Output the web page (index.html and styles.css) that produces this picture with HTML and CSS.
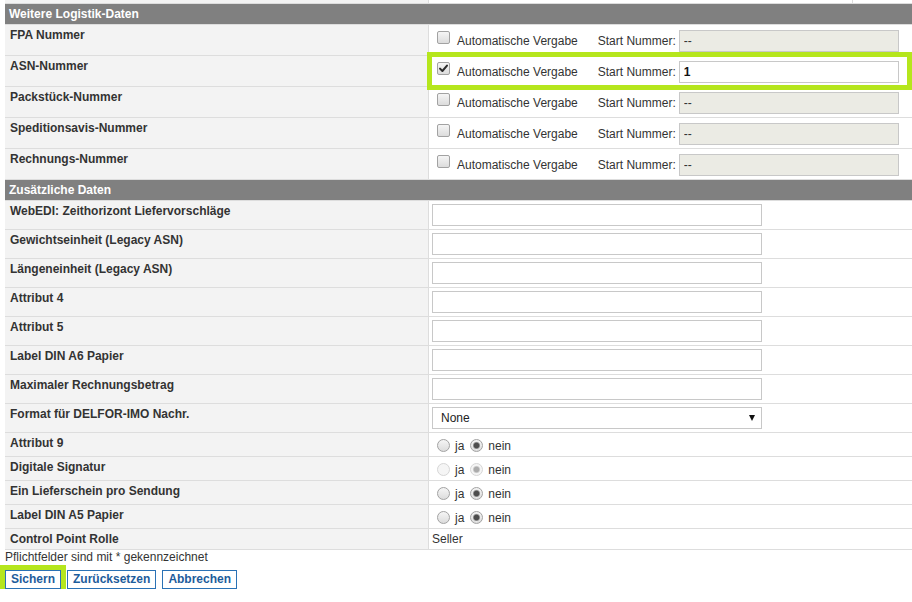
FILE: index.html
```html
<!DOCTYPE html>
<html lang="de">
<head>
<meta charset="utf-8">
<title>Logistik-Daten</title>
<link rel="stylesheet" href="styles.css">
</head>
<body>
<div class="page">
  <table class="grid">
    <colgroup><col class="col-label"><col class="col-value"></colgroup>
    <tbody>
      <tr class="stub"><td class="lbl"></td><td class="val"><div class="stub-split"><div class="stub-a"></div><div class="stub-b"></div></div></td></tr>

      <tr class="section"><td colspan="2">Weitere Logistik-Daten</td></tr>
      <tr>
        <td class="lbl">FPA Nummer</td>
        <td class="val val-auto"><div class="auto"><span class="cb"></span><span class="auto-text">Automatische Vergabe</span><span class="start-label">Start Nummer:</span><input class="inp inp-start" type="text" value="--" disabled></div></td>
      </tr>
      <tr>
        <td class="lbl">ASN-Nummer</td>
        <td class="val val-auto val-marked"><div class="auto"><span class="cb"><svg class="tick" viewBox="0 0 11 11" width="11" height="11"><path d="M2 5.6 L4.4 8 L9 2.6" fill="none" stroke="#2b2b2b" stroke-width="2" stroke-linecap="round" stroke-linejoin="round"/></svg></span><span class="auto-text">Automatische Vergabe</span><span class="start-label">Start Nummer:</span><input class="inp inp-start inp-bold" type="text" value="1"></div><div class="hl hl-row"></div></td>
      </tr>
      <tr>
        <td class="lbl">Packstück-Nummer</td>
        <td class="val val-auto"><div class="auto"><span class="cb"></span><span class="auto-text">Automatische Vergabe</span><span class="start-label">Start Nummer:</span><input class="inp inp-start" type="text" value="--" disabled></div></td>
      </tr>
      <tr>
        <td class="lbl">Speditionsavis-Nummer</td>
        <td class="val val-auto"><div class="auto"><span class="cb"></span><span class="auto-text">Automatische Vergabe</span><span class="start-label">Start Nummer:</span><input class="inp inp-start" type="text" value="--" disabled></div></td>
      </tr>
      <tr>
        <td class="lbl">Rechnungs-Nummer</td>
        <td class="val val-auto"><div class="auto"><span class="cb"></span><span class="auto-text">Automatische Vergabe</span><span class="start-label">Start Nummer:</span><input class="inp inp-start" type="text" value="--" disabled></div></td>
      </tr>

      <tr class="section"><td colspan="2">Zusätzliche Daten</td></tr>
      <tr><td class="lbl">WebEDI: Zeithorizont Liefervorschläge</td><td class="val val-field"><input class="inp inp-wide" type="text"></td></tr>
      <tr><td class="lbl">Gewichtseinheit (Legacy ASN)</td><td class="val val-field"><input class="inp inp-wide" type="text"></td></tr>
      <tr><td class="lbl">Längeneinheit (Legacy ASN)</td><td class="val val-field"><input class="inp inp-wide" type="text"></td></tr>
      <tr><td class="lbl">Attribut 4</td><td class="val val-field"><input class="inp inp-wide" type="text"></td></tr>
      <tr><td class="lbl">Attribut 5</td><td class="val val-field"><input class="inp inp-wide" type="text"></td></tr>
      <tr><td class="lbl">Label DIN A6 Papier</td><td class="val val-field"><input class="inp inp-wide" type="text"></td></tr>
      <tr><td class="lbl">Maximaler Rechnungsbetrag</td><td class="val val-field"><input class="inp inp-wide" type="text"></td></tr>
      <tr><td class="lbl">Format für DELFOR-IMO Nachr.</td><td class="val val-field"><div class="sel"><select class="sel-box"><option>None</option></select></div></td></tr>
      <tr><td class="lbl">Attribut 9</td><td class="val val-radio"><div class="radios"><span class="opt"><span class="rb"></span>ja</span><span class="opt"><span class="rb on"></span>nein</span></div></td></tr>
      <tr><td class="lbl">Digitale Signatur</td><td class="val val-radio"><div class="radios dis"><span class="opt"><span class="rb"></span>ja</span><span class="opt"><span class="rb on"></span>nein</span></div></td></tr>
      <tr><td class="lbl">Ein Lieferschein pro Sendung</td><td class="val val-radio"><div class="radios"><span class="opt"><span class="rb"></span>ja</span><span class="opt"><span class="rb on"></span>nein</span></div></td></tr>
      <tr><td class="lbl">Label DIN A5 Papier</td><td class="val val-radio"><div class="radios"><span class="opt"><span class="rb"></span>ja</span><span class="opt"><span class="rb on"></span>nein</span></div></td></tr>
      <tr><td class="lbl">Control Point Rolle</td><td class="val val-plain">Seller</td></tr>
    </tbody>
  </table>
  <p class="note">Pflichtfelder sind mit * gekennzeichnet</p>
  <div class="actions">
    <button class="btn" type="button">Sichern<span class="hl hl-btn"></span></button>
    <button class="btn" type="button">Zurücksetzen</button>
    <button class="btn" type="button">Abbrechen</button>
  </div>
</div>
</body>
</html>
```
FILE: styles.css
```css
html, body {
  margin: 0;
  padding: 0;
  background: #fff;
}
body {
  font-family: "Liberation Sans", Arial, sans-serif;
  font-size: 12px;
  line-height: 14px;
  color: #333;
  overflow: hidden;
}
.page {
  padding-left: 5px;
}
.grid {
  width: 907px;
  table-layout: fixed;
  border-collapse: separate;
  border-spacing: 0;
}
.col-label { width: 424px; }
.col-value { width: 483px; }
.grid td {
  border-bottom: 1px solid #dddddd;
  padding: 0;
  vertical-align: top;
}
.lbl {
  background: #f3f3f3;
  border-right: 1px solid #dddddd;
  font-weight: bold;
}
.grid td.lbl { padding: 3px 5px; }
.val { background: #fff; }

/* partial row at top */
.grid .stub td { padding: 0; line-height: 0; font-size: 0; }
.stub-split { display: flex; height: 3px; }
.stub-a { width: 423px; border-right: 1px solid #dddddd; }
.stub-b { flex: 1; }

/* section headers */
.grid .section td {
  background: #808080;
  color: #fff;
  font-weight: bold;
  padding: 3px 4px;
}

/* auto-numbering rows */
.grid td.val-auto { padding: 5px 3px 3px 8px; }
.val-marked { position: relative; }
.auto {
  display: flex;
  align-items: center;
  height: 22px;
}
.cb {
  width: 13px;
  height: 13px;
  box-sizing: border-box;
  border: 1px solid #a2a2a2;
  border-radius: 2px;
  background: linear-gradient(#f5f5f5, #dcdcdc);
  margin-right: 7px;
  margin-bottom: 8px;
  display: flex;
  align-items: center;
  justify-content: center;
  flex: none;
}
.tick { display: block; }
.auto-text { margin-right: 20px; white-space: nowrap; }
.start-label { margin-right: 3px; white-space: nowrap; }

.inp {
  height: 22px;
  box-sizing: border-box;
  border: 1px solid #c8c8c8;
  border-radius: 0;
  padding: 0 4px;
  margin: 0;
  font-family: "Liberation Sans", Arial, sans-serif;
  font-size: 12px;
  color: #333;
  background: #fff;
  outline: none;
  display: block;
}
.inp[disabled] {
  background: #ebebe4;
  color: #333;
  -webkit-text-fill-color: #333;
}
.inp-start { width: 220px; }
.inp-bold { font-weight: bold; color: #111; }
.inp-wide { width: 330px; }

/* text field rows */
.grid td.val-field { padding: 3px; }

/* select */
.sel {
  position: relative;
  width: 330px;
}
.sel-box {
  -webkit-appearance: none;
  appearance: none;
  display: block;
  width: 330px;
  height: 22px;
  box-sizing: border-box;
  border: 1px solid #c8c8c8;
  border-radius: 0;
  background: #fff;
  margin: 0;
  padding: 0 0 0 8px;
  font-family: "Liberation Sans", Arial, sans-serif;
  font-size: 12px;
  color: #222;
}
.sel::after {
  content: "";
  position: absolute;
  right: 7px;
  top: 8px;
  border-left: 3.5px solid transparent;
  border-right: 3.5px solid transparent;
  border-top: 6px solid #111;
  pointer-events: none;
}

/* radio rows */
.grid td.val-radio { padding: 4px 3px 2px 8px; }
.radios {
  display: flex;
  align-items: center;
  height: 17px;
  gap: 6px;
}
.opt {
  display: flex;
  align-items: center;
  gap: 5px;
}
.rb {
  width: 13px;
  height: 13px;
  box-sizing: border-box;
  border: 1px solid #a2a2a2;
  border-radius: 50%;
  background: linear-gradient(#f5f5f5, #dcdcdc);
  flex: none;
}
.rb.on {
  background: radial-gradient(circle at 50% 50%, #4d4d4d 0, #4d4d4d 2.4px, #9a9a9a 3.2px, #e8e8e8 4px, transparent 4.2px), linear-gradient(#f5f5f5, #dcdcdc);
}
.dis .rb {
  border-color: #d6d6d6;
  background: #f5f5f5;
}
.dis .rb.on {
  background: radial-gradient(circle at 50% 50%, #ababab 0, #ababab 2.4px, #cfcfcf 3.2px, #f2f2f2 4px, transparent 4.2px), #f5f5f5;
}

/* plain value */
.grid td.val-plain { padding: 3px; }

/* footer */
.note {
  margin: 0;
}
.actions {
  display: flex;
  gap: 6px;
  margin-top: 6px;
}
.btn {
  position: relative;
  height: 19px;
  box-sizing: border-box;
  border: 1px solid #2a72b5;
  border-radius: 0;
  background: #fff;
  color: #1d5c9b;
  font-family: "Liberation Sans", Arial, sans-serif;
  font-size: 12px;
  font-weight: bold;
  line-height: 17px;
  padding: 0 5px;
  margin: 0;
}

/* highlight annotations */
.hl {
  position: absolute;
  border: 5px solid #b5e61d;
  pointer-events: none;
}
.hl-row {
  top: -4px;
  left: -2px;
  right: 0;
  bottom: -4px;
}
.hl-btn {
  top: -6px;
  left: -6px;
  right: -6px;
  bottom: -6px;
}
```
